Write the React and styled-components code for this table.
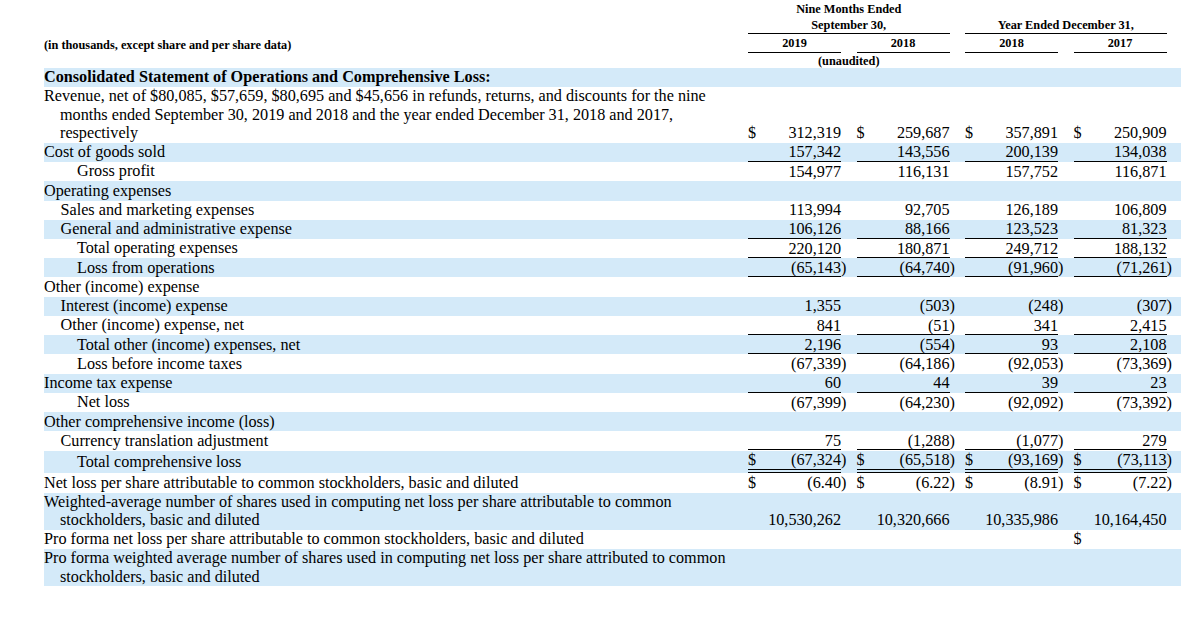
import styled, { createGlobalStyle } from "styled-components";

const GlobalStyle = createGlobalStyle`
  body {
    margin: 0;
    background: #fff;
    color: #000;
    font-family: "Liberation Serif", "Times New Roman", serif;
  }
`;

const Page = styled.div`
  padding-left: 44px;
  width: 1137px;
`;

const HeaderGrid = styled.div`
  display: grid;
  grid-template-columns: 688.5px repeat(4, 93px);
  column-gap: 15.5px;
  padding-right: 14.5px;
  font-size: 12.3px;
  font-weight: bold;
  line-height: 16px;
`;

const Caption = styled.div`
  grid-column: ${(p) => p.$col};
  grid-row: ${(p) => p.$row};
  align-self: ${(p) => p.$align || "stretch"};
  text-align: center;
  padding-top: ${(p) => p.$pad || 0}px;
  border-bottom: ${(p) => (p.$ruled ? "1px solid #000" : "none")};
  line-height: ${(p) => p.$lh || 16}px;
`;

const Units = styled.div`
  grid-column: 1;
  grid-row: 2;
  padding-top: 3px;
`;

const Row = styled.div`
  box-sizing: border-box;
  display: grid;
  grid-template-columns: 688.5px repeat(4, 93px);
  column-gap: 15.5px;
  min-height: 19.24px;
  padding: 0.2px 14.5px 0.2px 0;
  background: ${(p) => (p.$shaded ? "#d4eaf9" : "transparent")};
  font-size: 16.2px;
  line-height: 18.4px;
`;

const Label = styled.div`
  align-self: center;
  padding-left: ${(p) => p.$indent * 16.5}px;
  font-weight: ${(p) => (p.$bold ? "bold" : "normal")};
  white-space: nowrap;
`;

const Line = styled.div`
  padding-left: ${(p) => (p.$hang ? 16 : 0)}px;
`;

const Amount = styled.div`
  align-self: end;
  display: flex;
  white-space: nowrap;
  box-shadow: ${(p) => (p.$rule === "single" ? "inset 0 -1px 0 #000" : "none")};
  border-bottom: ${(p) => (p.$rule === "double" ? "4px double #000" : "none")};
`;

const Dollar = styled.span`
  flex: none;
`;

const Figure = styled.span`
  flex: 1;
  text-align: right;
`;

const Paren = styled.span`
  display: inline-block;
  width: 0;
`;

const rows = [
  { label: ["Consolidated Statement of Operations and Comprehensive Loss:"], bold: true },
  {
    label: [
      "Revenue, net of $80,085, $57,659, $80,695 and $45,656 in refunds, returns, and discounts for the nine",
      "months ended September 30, 2019 and 2018 and the year ended December 31, 2018 and 2017,",
      "respectively",
    ],
    values: ["$312,319", "$259,687", "$357,891", "$250,909"],
  },
  { label: ["Cost of goods sold"], values: ["157,342", "143,556", "200,139", "134,038"], rule: "single" },
  { label: ["Gross profit"], indent: 2, values: ["154,977", "116,131", "157,752", "116,871"] },
  { label: ["Operating expenses"] },
  { label: ["Sales and marketing expenses"], indent: 1, values: ["113,994", "92,705", "126,189", "106,809"] },
  { label: ["General and administrative expense"], indent: 1, values: ["106,126", "88,166", "123,523", "81,323"], rule: "single" },
  { label: ["Total operating expenses"], indent: 2, values: ["220,120", "180,871", "249,712", "188,132"], rule: "single" },
  { label: ["Loss from operations"], indent: 2, values: ["(65,143)", "(64,740)", "(91,960)", "(71,261)"], rule: "single" },
  { label: ["Other (income) expense"] },
  { label: ["Interest (income) expense"], indent: 1, values: ["1,355", "(503)", "(248)", "(307)"] },
  { label: ["Other (income) expense, net"], indent: 1, values: ["841", "(51)", "341", "2,415"], rule: "single" },
  { label: ["Total other (income) expenses, net"], indent: 2, values: ["2,196", "(554)", "93", "2,108"], rule: "single" },
  { label: ["Loss before income taxes"], indent: 2, values: ["(67,339)", "(64,186)", "(92,053)", "(73,369)"] },
  { label: ["Income tax expense"], values: ["60", "44", "39", "23"], rule: "single" },
  { label: ["Net loss"], indent: 2, values: ["(67,399)", "(64,230)", "(92,092)", "(73,392)"] },
  { label: ["Other comprehensive income (loss)"] },
  { label: ["Currency translation adjustment"], indent: 1, values: ["75", "(1,288)", "(1,077)", "279"], rule: "single" },
  { label: ["Total comprehensive loss"], indent: 2, values: ["$(67,324)", "$(65,518)", "$(93,169)", "$(73,113)"], rule: "double" },
  {
    label: ["Net loss per share attributable to common stockholders, basic and diluted"],
    values: ["$(6.40)", "$(6.22)", "$(8.91)", "$(7.22)"],
  },
  {
    label: [
      "Weighted-average number of shares used in computing net loss per share attributable to common",
      "stockholders, basic and diluted",
    ],
    values: ["10,530,262", "10,320,666", "10,335,986", "10,164,450"],
  },
  { label: ["Pro forma net loss per share attributable to common stockholders, basic and diluted"], values: ["", "", "", "$"] },
  {
    label: [
      "Pro forma weighted average number of shares used in computing net loss per share attributed to common",
      "stockholders, basic and diluted",
    ],
  },
];

function Cell({ value, rule }) {
  const hasDollar = value.startsWith("$");
  let text = hasDollar ? value.slice(1) : value;
  const closes = text.endsWith(")");
  if (closes) text = text.slice(0, -1);
  return (
    <Amount $rule={rule}>
      <Dollar>{hasDollar ? "$" : ""}</Dollar>
      <Figure>{text}</Figure>
      <Paren>{closes ? ")" : ""}</Paren>
    </Amount>
  );
}

export default function App() {
  return (
    <Page>
      <GlobalStyle />
      <HeaderGrid>
        <Caption $col="2 / span 2" $row={1} $pad={1} $ruled>
          Nine Months Ended
          <br />
          September 30,
        </Caption>
        <Caption $col="4 / span 2" $row={1} $align="end" $ruled>
          Year Ended December 31,
        </Caption>
        <Units>(in thousands, except share and per share data)</Units>
        {["2019", "2018", "2018", "2017"].map((y, i) => (
          <Caption key={i} $col={i + 2} $row={2} $pad={1} $ruled>
            {y}
          </Caption>
        ))}
        <Caption $col="2 / span 2" $row={3} $pad={1} $lh={14}>
          (unaudited)
        </Caption>
      </HeaderGrid>
      {rows.map((r, i) => (
        <Row key={i} $shaded={i % 2 === 0}>
          <Label $indent={r.indent || 0} $bold={r.bold}>
            {r.label.map((l, j) => (
              <Line key={j} $hang={j > 0}>
                {l}
              </Line>
            ))}
          </Label>
          {(r.values || ["", "", "", ""]).map((v, j) => (
            <Cell key={j} value={v} rule={r.rule} />
          ))}
        </Row>
      ))}
    </Page>
  );
}
